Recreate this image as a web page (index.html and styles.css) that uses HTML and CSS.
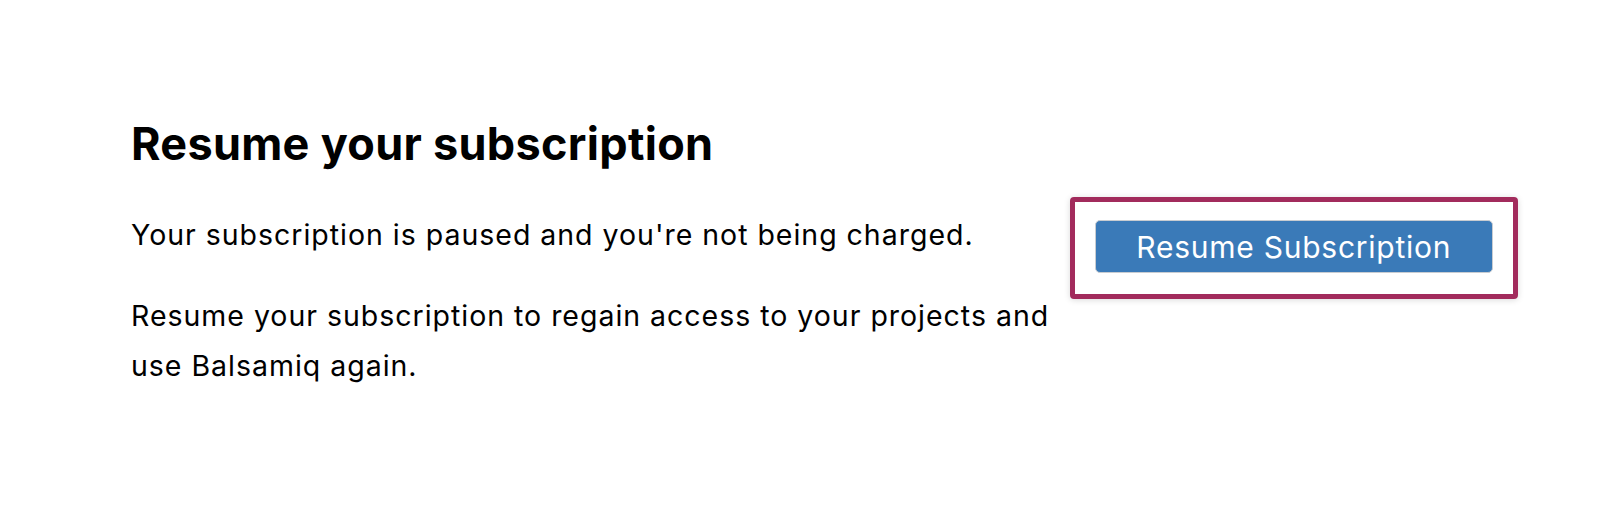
FILE: index.html
```html
<!DOCTYPE html>
<html lang="en">
<head>
    <meta charset="UTF-8">
    <meta name="viewport" content="width=device-width, initial-scale=1.0">
    <title>Resume your subscription</title>
    <link rel="stylesheet" href="styles.css">
</head>
<body>
    <div class="container">
        <h1>Resume your subscription</h1>
        <div class="resume-row">
            <div class="copy">
                <p>Your subscription is paused and you're not being charged.</p>
                <p>Resume your subscription to regain access to your projects and use Balsamiq again.</p>
            </div>
            <div class="highlight">
                <button class="resume-btn" type="button">Resume Subscription</button>
            </div>
        </div>
    </div>
</body>
</html>
```
FILE: styles.css
```css
body {
    margin: 0;
    background-color: #ffffff;
    color: #000000;
    font-family: Inter, "Noto Sans", sans-serif;
}

.container {
    padding: 117px 96px 0 131px;
}

h1 {
    margin: 0;
    font-size: 45px;
    font-weight: 700;
    line-height: 54px;
    letter-spacing: 0.3px;
}

.resume-row {
    display: flex;
    align-items: flex-start;
    justify-content: space-between;
    margin-top: 26px;
}

.copy {
    width: 940px;
    padding-top: 13px;
}

.copy p {
    margin: 0 0 31px;
    font-size: 28.5px;
    line-height: 50px;
    letter-spacing: 0.98px;
}

/* Cadre autour du bouton */
.highlight {
    width: 449px;
    height: 102px;
    box-sizing: border-box;
    padding: 18px 20px 21px;
    border: 5px solid #a22b5c;
    border-radius: 4px;
    box-shadow: 0 1px 6px rgba(0, 0, 0, 0.15);
}

.resume-btn {
    display: flex;
    align-items: center;
    justify-content: center;
    width: 100%;
    height: 53px;
    padding: 0;
    background-color: #3a7ab8;
    color: #ffffff;
    border: 1px solid #c8ccd1;
    border-radius: 5px;
    font-family: Inter, "Noto Sans", sans-serif;
    font-size: 30px;
    letter-spacing: 0.75px;
    cursor: pointer;
}
```
